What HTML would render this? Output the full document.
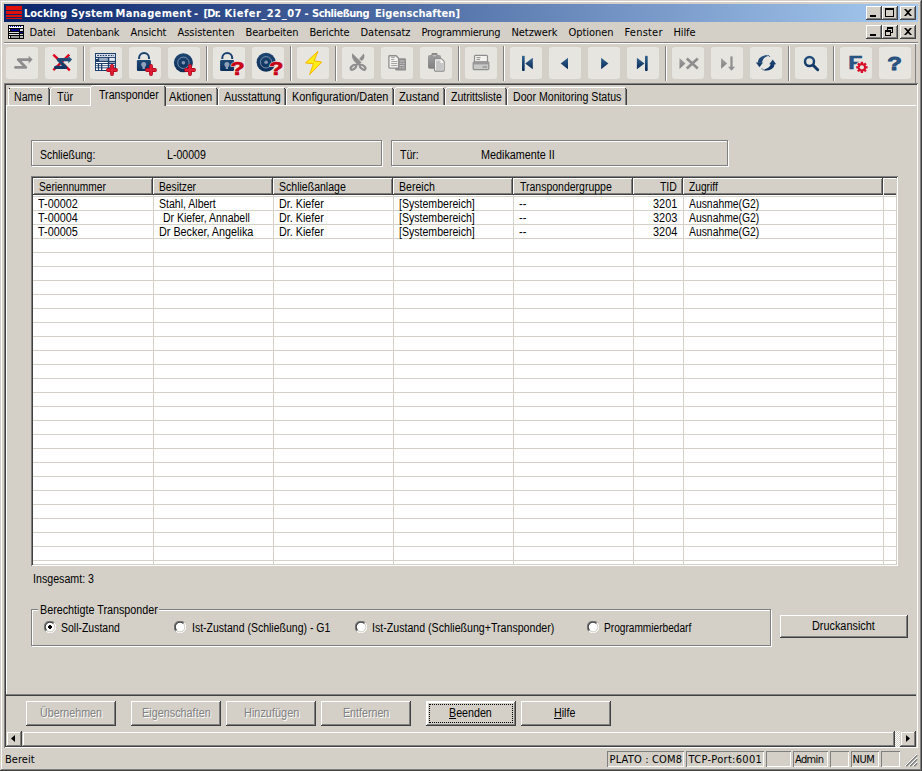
<!DOCTYPE html>
<html lang="de"><head><meta charset="utf-8"><title>Locking System Management</title>
<style>
html,body{margin:0;padding:0;}
body{width:922px;height:771px;overflow:hidden;background:#d4d0c8;position:relative;}
div,span,svg{position:absolute;box-sizing:border-box;}

.x{position:absolute;white-space:pre;line-height:16px;height:16px;color:#000;}
.s{font:12px "Liberation Sans", sans-serif;transform-origin:0 0;}
.t{font:11px "DejaVu Sans Condensed", "Liberation Sans", sans-serif;}
.tb{font:bold 11px "DejaVu Sans Condensed", "Liberation Sans", sans-serif;color:#fff;}
.dis{color:#808080;text-shadow:1px 1px 0 #fff;}
.x u{text-decoration:underline;text-underline-offset:1px;}

.hl{height:1px;}.vl{width:1px;}
.raised{background:#d4d0c8;box-shadow:inset -1px -1px 0 #404040, inset 1px 1px 0 #fff, inset -2px -2px 0 #808080;}
.btn{background:#d4d0c8;box-shadow:inset -1px -1px 0 #404040, inset 1px 1px 0 #fff, inset -2px -2px 0 #808080;}
.sbb{background:#d4d0c8;box-shadow:inset -1px -1px 0 #404040, inset 1px 1px 0 #d4d0c8, inset -2px -2px 0 #808080, inset 2px 2px 0 #fff;}
.sunk{box-shadow:inset 1px 1px 0 #808080, inset -1px -1px 0 #fff;}
.pane{box-shadow:inset 1px 1px 0 #808080, inset -1px -1px 0 #fff;}
.etch{border:1px solid #808080;box-shadow:1px 1px 0 #fff, inset 1px 1px 0 #fff;}
.tbb{width:32px;height:32px;top:47px;background:#e7e5e0;border-radius:3px;}
.tsep{top:46px;width:2px;height:35px;border-left:1px solid #808080;border-right:1px solid #fff;}
.hd{top:178px;height:17px;background:#d4d0c8;box-shadow:inset -1px -1px 0 #404040, inset 1px 1px 0 #fff, inset -2px -2px 0 #808080;}
.gv{top:195px;width:1px;height:369px;background:#d5d1c9;}
.gh{left:33px;width:863px;height:1px;background:#d5d1c9;}
.radio{width:12px;height:12px;border-radius:50%;background:#fff;box-shadow:inset 1px 1px 0 #808080, inset 2px 2px 0 #404040;}
</style></head>
<body>
<!-- window frame -->
<div style="left:0;top:0;width:922px;height:771px;box-shadow:inset -1px -1px 0 #404040, inset 1px 1px 0 #d4d0c8, inset -2px -2px 0 #808080, inset 2px 2px 0 #fff;"></div>
<!-- title bar -->
<div id="title" style="left:4px;top:4px;width:914px;height:18px;background:linear-gradient(90deg,#0a246a 0%,#a6caf0 100%);"></div>
<svg style="left:6px;top:6px" width="16" height="14" viewBox="0 0 16 14"><rect x="0" y="0" width="16" height="4" fill="#e01008"/><rect x="0" y="5" width="16" height="3" fill="#e01008"/><rect x="0" y="9" width="16" height="2" fill="#e01008"/><rect x="0" y="12" width="16" height="1" fill="#e01008"/></svg>
<!-- caption buttons -->
<div class="btn" style="left:866px;top:6px;width:16px;height:14px"></div>
<div class="btn" style="left:882px;top:6px;width:16px;height:14px"></div>
<div class="btn" style="left:900px;top:6px;width:16px;height:14px"></div>
<div class="btn" style="left:866px;top:25px;width:16px;height:14px"></div>
<div class="btn" style="left:882px;top:25px;width:16px;height:14px"></div>
<div class="btn" style="left:900px;top:25px;width:16px;height:14px"></div>
<svg style="left:866px;top:6px" width="50" height="33" viewBox="0 0 50 33" shape-rendering="crispEdges" fill="#000">
<rect x="4" y="9" width="6" height="2"/>
<path d="M19 2h9v9h-9zM20 4v6h7v-6z" fill-rule="evenodd"/>
<path d="M38 3h2l2 2 2-2h2l-3 3.5 3 3.500h-2l-2-2-2 2h-2l3-3.500z" shape-rendering="auto"/>
<rect x="4" y="28" width="6" height="2"/>
<path d="M21 21h6v6h-2v-1h1v-3h-4v1h-1zM19 24h6v6h-6zM20 26v3h4v-3z" fill-rule="evenodd"/>
<path d="M38 22h2l2 2 2-2h2l-3 3.500 3 3.500h-2l-2-2-2 2h-2l3-3.500z" shape-rendering="auto"/>
</svg>
<!-- menu bar -->
<svg style="left:8px;top:25px" width="16" height="14" viewBox="0 0 16 14" shape-rendering="crispEdges"><rect width="16" height="14" fill="#000"/><rect x="1" y="1" width="14" height="2" fill="#fff"/><rect x="2" y="1" width="1" height="1" fill="#00a"/><rect x="4" y="1" width="1" height="1" fill="#00a"/><rect x="6" y="1" width="1" height="1" fill="#00a"/><rect x="8" y="1" width="1" height="1" fill="#00a"/><rect x="10" y="1" width="1" height="1" fill="#00a"/><rect x="12" y="1" width="1" height="1" fill="#00a"/><rect x="1" y="4" width="1" height="2" fill="#fff"/><rect x="3" y="4" width="8" height="2" fill="#00008b"/><rect x="12" y="4" width="3" height="2" fill="#ddd"/><rect x="1" y="7" width="10" height="1" fill="#ddd"/><rect x="12" y="7" width="3" height="1" fill="#00008b"/><rect x="1" y="9" width="10" height="1" fill="#ddd"/><rect x="12" y="9" width="3" height="1" fill="#ddd"/><rect x="1" y="11" width="1" height="2" fill="#fff"/><rect x="3" y="11" width="8" height="2" fill="#999"/><rect x="12" y="11" width="3" height="2" fill="#bbb"/></svg>
<div class="hl" style="left:4px;top:42px;width:914px;background:#808080"></div>
<div class="hl" style="left:4px;top:43px;width:914px;background:#fff"></div>
<!-- toolbar -->
<div class="vl" style="left:915px;top:44px;height:39px;background:#808080"></div>
<div id="toolbar"><div class="tbb" style="left:6px"></div><div class="tbb" style="left:45px"></div><div class="tbb" style="left:90px"></div><div class="tbb" style="left:129px"></div><div class="tbb" style="left:168px"></div><div class="tbb" style="left:213px"></div><div class="tbb" style="left:252px"></div><div class="tbb" style="left:297px"></div><div class="tbb" style="left:342px"></div><div class="tbb" style="left:381px"></div><div class="tbb" style="left:420px"></div><div class="tbb" style="left:465px"></div><div class="tbb" style="left:510px"></div><div class="tbb" style="left:549px"></div><div class="tbb" style="left:588px"></div><div class="tbb" style="left:627px"></div><div class="tbb" style="left:672px"></div><div class="tbb" style="left:711px"></div><div class="tbb" style="left:750px"></div><div class="tbb" style="left:795px"></div><div class="tbb" style="left:840px"></div><div class="tbb" style="left:879px"></div><div class="tsep" style="left:83px"></div><div class="tsep" style="left:206px"></div><div class="tsep" style="left:290px"></div><div class="tsep" style="left:335px"></div><div class="tsep" style="left:458px"></div><div class="tsep" style="left:503px"></div><div class="tsep" style="left:665px"></div><div class="tsep" style="left:788px"></div><div class="tsep" style="left:833px"></div><svg width="0" height="0" style="left:0;top:0"><defs>
<linearGradient id="nv" x1="0" y1="0" x2="0" y2="1"><stop offset="0" stop-color="#33638f"/><stop offset="1" stop-color="#082a57"/></linearGradient>
<linearGradient id="nvu" gradientUnits="userSpaceOnUse" x1="0" y1="5" x2="0" y2="26"><stop offset="0" stop-color="#2c5a87"/><stop offset="1" stop-color="#082a57"/></linearGradient>
<linearGradient id="rd" x1="0" y1="0" x2="0" y2="1"><stop offset="0" stop-color="#e8203a"/><stop offset="1" stop-color="#b80018"/></linearGradient>
<linearGradient id="gy" x1="0" y1="0" x2="0" y2="1"><stop offset="0" stop-color="#a0a0a0"/><stop offset="1" stop-color="#808080"/></linearGradient>
<g id="plus"><path d="M22 19v8M18 23h8" stroke="#a80018" stroke-width="3.800" stroke-linecap="round"/><path d="M22 19v8M18 23h8" stroke="#de1c34" stroke-width="2.600" stroke-linecap="round"/></g>
<g id="lock"><path d="M10.100 12v-1.100a4.950 4.950 0 0 1 9.900 0v1.100" fill="none" stroke="#17406e" stroke-width="2"/><rect x="7.900" y="13.100" width="14" height="10.900" rx="1.200" fill="url(#nvu)"/><circle cx="14.700" cy="17.400" r="2.500" fill="#8fa0bb"/><rect x="13.500" y="18" width="2.400" height="4" rx=".5" fill="#8fa0bb"/></g>
<g id="disc"><circle cx="15.400" cy="15.800" r="9.500" fill="url(#nvd)"/><circle cx="15.400" cy="15.800" r="5.700" fill="none" stroke="#8ea3c0" stroke-width=".8"/><circle cx="15.400" cy="15.800" r="1.800" fill="#8296b5"/></g>
<linearGradient id="nvd" gradientUnits="userSpaceOnUse" x1="0" y1="6" x2="0" y2="26"><stop offset="0" stop-color="#1d4672"/><stop offset="1" stop-color="#0c2e58"/></linearGradient>
</defs></svg>
<svg style="left:6px;top:47px" width="32" height="32" viewBox="0 0 32 32"><path d="M9.500 20.400h10.300l-7.600-7.800h11" fill="none" stroke="#8e8e8e" stroke-width="2.800" stroke-linecap="round" stroke-linejoin="round"/><path d="M22.600 8.800l4 3.800-4 3.800z" fill="#8e8e8e"/></svg>
<svg style="left:45px;top:47px" width="32" height="32" viewBox="0 0 32 32"><path d="M8.300 7.600l16.500 15.800M24.300 7.600l-16 15.600" stroke="#e0001c" stroke-width="2.400"/><path d="M10.500 20.400h10.300l-7.600-7.800h10.500" fill="none" stroke="url(#nvu)" stroke-width="3.100" stroke-linecap="round" stroke-linejoin="round"/><path d="M23.300 8.900l3.800 3.700-3.800 3.700z" fill="#23507f"/></svg>
<svg style="left:90px;top:47px" width="32" height="32" viewBox="0 0 32 32"><rect x="5" y="6" width="21" height="18" fill="#1c3f6e"/><rect x="6" y="7.200" width="19" height="2.600" fill="#fff"/><path d="M7.200 8.500h17" stroke="#1c3f6e" stroke-width="1" stroke-dasharray="1.700 1"/><rect x="6" y="11" width="1.800" height="1" fill="#fff"/><rect x="9.100" y="10.900" width="8.700" height="3" fill="#9aabc4"/><rect x="19.300" y="10.900" width="5.600" height="3" fill="#e4e8ee"/><rect x="6" y="15" width="11.800" height="1" fill="#fff"/><rect x="19.300" y="15" width="5.600" height="1" fill="#9aabc4"/><rect x="6" y="17" width="1.800" height="1.300" fill="#fff"/><rect x="9.100" y="17" width="1.900" height="1.300" fill="#fff"/><rect x="12.300" y="17" width="5.500" height="1.300" fill="#fff"/><rect x="19.300" y="17" width="5.600" height="1.300" fill="#fff"/><rect x="6" y="19.100" width="1.800" height="1.300" fill="#fff"/><rect x="9.100" y="19.100" width="1.900" height="1.300" fill="#fff"/><rect x="12.300" y="19.100" width="5.500" height="1.300" fill="#fff"/><rect x="19.300" y="19.100" width="5.600" height="1.300" fill="#fff"/><rect x="6" y="21.300" width="2" height="1.700" fill="#fff"/><rect x="9.100" y="21.300" width="1.900" height="1.700" fill="#fff"/><rect x="12.300" y="21.300" width="5.500" height="1.700" fill="#fff"/><use href="#plus"/></svg>
<svg style="left:129px;top:47px" width="32" height="32" viewBox="0 0 32 32"><use href="#lock"/><use href="#plus"/></svg>
<svg style="left:168px;top:47px" width="32" height="32" viewBox="0 0 32 32"><use href="#disc"/><use href="#plus"/></svg>
<svg style="left:213px;top:47px" width="32" height="32" viewBox="0 0 32 32"><g transform="translate(-0.800,0)"><use href="#lock"/></g><g transform="translate(17.6,28) scale(1.32,1)"><text x="0" y="0" font-family="Liberation Sans, sans-serif" font-weight="bold" font-size="17.5" fill="#c80014" stroke="#efeeea" stroke-width="1.7" stroke-linejoin="round">?</text><text x="0" y="0" font-family="Liberation Sans, sans-serif" font-weight="bold" font-size="17.5" fill="#c80014" stroke="#c80014" stroke-width="0.7">?</text></g></svg>
<svg style="left:252px;top:47px" width="32" height="32" viewBox="0 0 32 32"><g transform="translate(-1.300,-0.500)"><use href="#disc"/></g><g transform="translate(17.3,28) scale(1.32,1)"><text x="0" y="0" font-family="Liberation Sans, sans-serif" font-weight="bold" font-size="17.5" fill="#c80014" stroke="#efeeea" stroke-width="1.7" stroke-linejoin="round">?</text><text x="0" y="0" font-family="Liberation Sans, sans-serif" font-weight="bold" font-size="17.5" fill="#c80014" stroke="#c80014" stroke-width="0.7">?</text></g></svg>
<svg style="left:297px;top:47px" width="32" height="32" viewBox="0 0 32 32"><path d="M21 4.200L8.500 15.900 16.400 16.700 12.600 27.600 24.800 15 17.200 13.800z" fill="#ffee14" stroke="#f7b400" stroke-width="1" stroke-linejoin="round"/></svg>
<svg style="left:342px;top:47px" width="32" height="32" viewBox="0 0 32 32"><path d="M10.200 6.200L19.500 15.300 17.200 17.400 13.600 15.800C10.600 12.800 9.200 9.500 10.200 6.200z" fill="#8e8e8e"/><path d="M21.800 6.400C23.100 9.200 22.100 12.100 19.900 13.900L17.100 11.900z" fill="#8e8e8e"/><path d="M13.600 18.400l3.400-2.400M18.600 18.400l-3.200-2.400" stroke="#8e8e8e" stroke-width="2.300"/><ellipse cx="11.400" cy="20.300" rx="3.200" ry="1.750" transform="rotate(-38 11.400 20.300)" fill="#e2e0db" stroke="#8e8e8e" stroke-width="2.100"/><ellipse cx="20.700" cy="20.300" rx="3.200" ry="1.750" transform="rotate(38 20.700 20.300)" fill="#e2e0db" stroke="#8e8e8e" stroke-width="2.100"/></svg>
<svg style="left:381px;top:47px" width="32" height="32" viewBox="0 0 32 32"><rect x="14.300" y="11.200" width="10.700" height="12.400" rx="1.200" fill="#8e8e8e"/><path d="M18.500 14h5M18.500 16.300h2M21.500 16.300h2M18.500 18.600h5M18.500 20.900h1.500M21 20.900h2.500" stroke="#d0d0d0" stroke-width=".9"/><path d="M8.700 8.750h6.400l2.500 2.500v9a.8.8 0 0 1-.8.8h-8.100a.8.800 0 0 1-.8-.8v-10.700a.8.800 0 0 1 .8-.8z" fill="#f3f2ef" stroke="#8e8e8e" stroke-width="1.300"/><path d="M10.200 10.500h3.500M10.200 12.500h3M10.200 14.500h6M10.200 16.500h6M10.200 18.500h6" stroke="#8e8e8e" stroke-width=".8"/></svg>
<svg style="left:420px;top:47px" width="32" height="32" viewBox="0 0 32 32"><rect x="8" y="8" width="13" height="13.700" rx="1.800" fill="url(#gy)"/><rect x="11.500" y="6" width="6" height="4" rx="1" fill="#8a8a8a"/><rect x="12.500" y="8.200" width="4" height="1.200" fill="#d0d0d0"/><path d="M15.300 11.700h6.200l2.700 2.700v8.900a.800.800 0 0 1-.8.800h-8.100a.800.800 0 0 1-.8-.8v-10.800a.800.800 0 0 1 .8-.8z" fill="#f4f4f2" stroke="#888" stroke-width="1.100"/><path d="M16 13.500h4.500v2.500h2.500v7h-7z" fill="#c6c6c6"/></svg>
<svg style="left:465px;top:47px" width="32" height="32" viewBox="0 0 32 32"><rect x="9.500" y="8.400" width="13" height="7" rx="1" fill="#f3f2ef" stroke="#8e8e8e" stroke-width="1.200"/><path d="M11.500 10.600h4M11.500 12.600h3.500" stroke="#8e8e8e" stroke-width="1"/><rect x="8.200" y="14.800" width="15.600" height="7.800" rx="1.200" fill="#c9c9c7" stroke="#8e8e8e" stroke-width="1.200"/><rect x="8.800" y="14.800" width="14.400" height="2.600" fill="#999"/><path d="M17.600 20h4.400" stroke="#8a8a8a" stroke-width="1.200"/></svg>
<svg style="left:510px;top:47px" width="32" height="32" viewBox="0 0 32 32"><rect x="12" y="8.800" width="2.700" height="15.200" rx=".8" fill="url(#nv)"/><path d="M15.200 16.500l7.600-5.700v11.400z" fill="url(#nv)"/></svg>
<svg style="left:549px;top:47px" width="32" height="32" viewBox="0 0 32 32"><path d="M11.700 16.500l7.300-5.700v11.400z" fill="url(#nv)"/></svg>
<svg style="left:588px;top:47px" width="32" height="32" viewBox="0 0 32 32"><path d="M20.400 16.500l-7.300-5.700v11.400z" fill="url(#nv)"/></svg>
<svg style="left:627px;top:47px" width="32" height="32" viewBox="0 0 32 32"><rect x="18" y="8.800" width="2.700" height="15.200" rx=".8" fill="url(#nv)"/><path d="M17.500 16.500l-7.600-5.700v11.400z" fill="url(#nv)"/></svg>
<svg style="left:672px;top:47px" width="32" height="32" viewBox="0 0 32 32"><path d="M7.500 10.900l5.900 5.500-5.900 5.500z" fill="url(#gy)"/><path d="M14.800 11.500l11 9.900M25.800 11.500l-11 9.900" stroke="#8e8e8e" stroke-width="2.700"/></svg>
<svg style="left:711px;top:47px" width="32" height="32" viewBox="0 0 32 32"><path d="M10.100 11.100l6 5.300-6 5.300z" fill="url(#gy)"/><path d="M20.500 9.400v11" stroke="#8e8e8e" stroke-width="2.200"/><path d="M17 19.800h7l-3.500 4z" fill="#8e8e8e"/></svg>
<svg style="left:750px;top:47px" width="32" height="32" viewBox="0 0 32 32"><path d="M7.700 15.800Q8 9 17.600 7.700L17.500 9.300Q12.800 10.800 11.800 15.800z" fill="url(#nvu)"/><path d="M5.900 15.400h7.200l-3.600 4.800z" fill="url(#nvu)"/><path d="M24.600 17Q24.400 23.200 14.400 23.800L14.300 22.400Q19.600 21.200 20.700 17z" fill="url(#nvu)"/><path d="M19.200 17.300h7l-3.500-4.700z" fill="url(#nvu)"/><circle cx="18.600" cy="8.600" r=".55" fill="#1d4a7a"/><circle cx="19.700" cy="9.500" r=".5" fill="#1d4a7a"/><circle cx="13.200" cy="22.700" r=".55" fill="#0f3360"/><circle cx="12" cy="21.800" r=".5" fill="#0f3360"/></svg>
<svg style="left:795px;top:47px" width="32" height="32" viewBox="0 0 32 32"><circle cx="14.500" cy="14.600" r="4.500" fill="none" stroke="url(#nvu)" stroke-width="2.500"/><path d="M18.200 18.300l4.500 4.400" stroke="#143a68" stroke-width="3" stroke-linecap="round"/></svg>
<svg style="left:840px;top:47px" width="32" height="32" viewBox="0 0 32 32"><g transform="translate(8.200,22.400) scale(1.280,1)"><text x="0" y="0" font-family="Liberation Sans, sans-serif" font-weight="bold" font-size="18.200" fill="url(#nvu)" stroke="#1a4473" stroke-width=".5">F</text></g><circle cx="21.900" cy="20.300" r="6.500" fill="#e9e7e2"/><path d="M27.57 19.08L27.57 21.52L26.05 21.43L25.64 22.43L26.77 23.45L25.05 25.17L24.03 24.04L23.03 24.45L23.12 25.97L20.68 25.97L20.77 24.45L19.77 24.04L18.75 25.17L17.03 23.45L18.16 22.43L17.75 21.43L16.23 21.52L16.23 19.08L17.75 19.17L18.16 18.17L17.03 17.15L18.75 15.43L19.77 16.56L20.77 16.15L20.68 14.63L23.12 14.63L23.03 16.15L24.03 16.56L25.05 15.43L26.77 17.15L25.64 18.17L26.05 19.17z" fill="#d8102a"/><circle cx="21.900" cy="20.300" r="2.100" fill="#e9e7e2"/></svg>
<svg style="left:879px;top:47px" width="32" height="32" viewBox="0 0 32 32"><g transform="translate(8.300,23) scale(1.260,1)"><text x="0" y="0" font-family="Liberation Sans, sans-serif" font-weight="bold" font-size="19" fill="url(#nvu)" stroke="#1d4a7a" stroke-width=".9">?</text></g></svg></div>
<!-- MDI client sunken frame -->
<div style="left:4px;top:83px;width:914px;height:665px;box-shadow:inset 1px 1px 0 #808080, inset -1px -1px 0 #fff, inset 2px 2px 0 #404040, inset -2px -2px 0 #d4d0c8;"></div>
<!-- tabs -->
<div id="tabs"><div style="left:6px;top:105px;width:910px;height:1px;background:#fff"></div>
<div style="left:6px;top:105px;width:1px;height:589px;background:#fff"></div>
<div style="left:8px;top:89px;width:1px;height:16px;background:#fff"></div>
<div style="left:9px;top:88px;width:1px;height:1px;background:#202020"></div>
<div style="left:10px;top:87px;width:38px;height:1px;background:#fff"></div>
<div style="left:48px;top:88px;width:1px;height:1px;background:#404040"></div>
<div style="left:48px;top:89px;width:1px;height:16px;background:#808080"></div>
<div style="left:49px;top:89px;width:1px;height:16px;background:#404040"></div>
<div style="left:50px;top:89px;width:1px;height:16px;background:#fff"></div>
<div style="left:51px;top:88px;width:1px;height:1px;background:#fff"></div>
<div style="left:52px;top:87px;width:38px;height:1px;background:#fff"></div>
<div style="left:166px;top:87px;width:50px;height:1px;background:#fff"></div>
<div style="left:216px;top:88px;width:1px;height:1px;background:#404040"></div>
<div style="left:216px;top:89px;width:1px;height:16px;background:#808080"></div>
<div style="left:217px;top:89px;width:1px;height:16px;background:#404040"></div>
<div style="left:218px;top:89px;width:1px;height:16px;background:#fff"></div>
<div style="left:219px;top:88px;width:1px;height:1px;background:#fff"></div>
<div style="left:220px;top:87px;width:64px;height:1px;background:#fff"></div>
<div style="left:284px;top:88px;width:1px;height:1px;background:#404040"></div>
<div style="left:284px;top:89px;width:1px;height:16px;background:#808080"></div>
<div style="left:285px;top:89px;width:1px;height:16px;background:#404040"></div>
<div style="left:286px;top:89px;width:1px;height:16px;background:#fff"></div>
<div style="left:287px;top:88px;width:1px;height:1px;background:#fff"></div>
<div style="left:288px;top:87px;width:104px;height:1px;background:#fff"></div>
<div style="left:392px;top:88px;width:1px;height:1px;background:#404040"></div>
<div style="left:392px;top:89px;width:1px;height:16px;background:#808080"></div>
<div style="left:393px;top:89px;width:1px;height:16px;background:#404040"></div>
<div style="left:394px;top:89px;width:1px;height:16px;background:#fff"></div>
<div style="left:395px;top:88px;width:1px;height:1px;background:#fff"></div>
<div style="left:396px;top:87px;width:47px;height:1px;background:#fff"></div>
<div style="left:443px;top:88px;width:1px;height:1px;background:#404040"></div>
<div style="left:443px;top:89px;width:1px;height:16px;background:#808080"></div>
<div style="left:444px;top:89px;width:1px;height:16px;background:#404040"></div>
<div style="left:445px;top:89px;width:1px;height:16px;background:#fff"></div>
<div style="left:446px;top:88px;width:1px;height:1px;background:#fff"></div>
<div style="left:447px;top:87px;width:58px;height:1px;background:#fff"></div>
<div style="left:505px;top:88px;width:1px;height:1px;background:#404040"></div>
<div style="left:505px;top:89px;width:1px;height:16px;background:#808080"></div>
<div style="left:506px;top:89px;width:1px;height:16px;background:#404040"></div>
<div style="left:507px;top:89px;width:1px;height:16px;background:#fff"></div>
<div style="left:508px;top:88px;width:1px;height:1px;background:#fff"></div>
<div style="left:509px;top:87px;width:116px;height:1px;background:#fff"></div>
<div style="left:625px;top:88px;width:1px;height:1px;background:#404040"></div>
<div style="left:625px;top:89px;width:1px;height:16px;background:#808080"></div>
<div style="left:626px;top:89px;width:1px;height:16px;background:#404040"></div>
<div style="left:90px;top:85px;width:76px;height:21px;background:#d4d0c8"></div>
<div style="left:90px;top:87px;width:1px;height:19px;background:#fff"></div>
<div style="left:91px;top:86px;width:1px;height:1px;background:#fff"></div>
<div style="left:92px;top:85px;width:72px;height:1px;background:#fff"></div>
<div style="left:164px;top:86px;width:1px;height:1px;background:#404040"></div>
<div style="left:164px;top:87px;width:1px;height:19px;background:#808080"></div>
<div style="left:165px;top:87px;width:1px;height:19px;background:#404040"></div></div>
<!-- field frames -->
<div class="etch" style="left:31px;top:140px;width:351px;height:26px"></div>
<div class="etch" style="left:391px;top:140px;width:337px;height:26px"></div>
<!-- list -->
<div style="left:31px;top:176px;width:867px;height:390px;background:#fff;box-shadow:inset 1px 1px 0 #808080, inset -1px -1px 0 #fff, inset 2px 2px 0 #404040, inset -2px -2px 0 #d4d0c8;"></div>
<div id="list"><div class="hd" style="left:33px;width:120px"></div><div class="hd" style="left:153px;width:120px"></div><div class="hd" style="left:273px;width:120px"></div><div class="hd" style="left:393px;width:120px"></div><div class="hd" style="left:513px;width:120px"></div><div class="hd" style="left:633px;width:50px"></div><div class="hd" style="left:683px;width:200px"></div><div class="hd" style="left:883px;width:13px;box-shadow:inset 1px 1px 0 #fff, inset 0 -1px 0 #404040, inset 0 -2px 0 #808080"></div><div class="gv" style="left:153px"></div><div class="gv" style="left:273px"></div><div class="gv" style="left:393px"></div><div class="gv" style="left:513px"></div><div class="gv" style="left:633px"></div><div class="gv" style="left:683px"></div><div class="gv" style="left:883px"></div><div class="gh" style="top:196px"></div><div class="gh" style="top:210px"></div><div class="gh" style="top:224px"></div><div class="gh" style="top:238px"></div><div class="gh" style="top:252px"></div><div class="gh" style="top:266px"></div><div class="gh" style="top:280px"></div><div class="gh" style="top:294px"></div><div class="gh" style="top:308px"></div><div class="gh" style="top:322px"></div><div class="gh" style="top:336px"></div><div class="gh" style="top:350px"></div><div class="gh" style="top:364px"></div><div class="gh" style="top:378px"></div><div class="gh" style="top:392px"></div><div class="gh" style="top:406px"></div><div class="gh" style="top:420px"></div><div class="gh" style="top:434px"></div><div class="gh" style="top:448px"></div><div class="gh" style="top:462px"></div><div class="gh" style="top:476px"></div><div class="gh" style="top:490px"></div><div class="gh" style="top:504px"></div><div class="gh" style="top:518px"></div><div class="gh" style="top:532px"></div><div class="gh" style="top:546px"></div><div class="gh" style="top:560px"></div></div>
<!-- group box -->
<div class="etch" style="left:31px;top:609px;width:740px;height:37px"></div>
<div style="left:38px;top:604px;width:121px;height:14px;background:#d4d0c8"></div>
<svg style="left:44px;top:621px" width="12" height="12" viewBox="0 0 12 12"><circle cx="6" cy="6" r="5" fill="#fff"/><path d="M1.900 10.100A5.500 5.500 0 0 1 10.100 1.900" fill="none" stroke="#808080" stroke-width="1.200"/><path d="M10.100 1.900A5.500 5.500 0 0 1 1.900 10.100" fill="none" stroke="#fff" stroke-width="1"/><path d="M2.600 9.400A4.500 4.500 0 0 1 9.400 2.600" fill="none" stroke="#404040" stroke-width="1.200"/><path d="M9.400 2.600A4.500 4.500 0 0 1 2.600 9.400" fill="none" stroke="#d4d0c8" stroke-width="1"/><path d="M5 4h2v1h1v2h-1v1h-2v-1h-1v-2h1z" fill="#000" shape-rendering="crispEdges"/></svg>
<svg style="left:174px;top:621px" width="12" height="12" viewBox="0 0 12 12"><circle cx="6" cy="6" r="5" fill="#fff"/><path d="M1.900 10.100A5.500 5.500 0 0 1 10.100 1.900" fill="none" stroke="#808080" stroke-width="1.200"/><path d="M10.100 1.900A5.500 5.500 0 0 1 1.900 10.100" fill="none" stroke="#fff" stroke-width="1"/><path d="M2.600 9.400A4.500 4.500 0 0 1 9.400 2.600" fill="none" stroke="#404040" stroke-width="1.200"/><path d="M9.400 2.600A4.500 4.500 0 0 1 2.600 9.400" fill="none" stroke="#d4d0c8" stroke-width="1"/></svg>
<svg style="left:355px;top:621px" width="12" height="12" viewBox="0 0 12 12"><circle cx="6" cy="6" r="5" fill="#fff"/><path d="M1.900 10.100A5.500 5.500 0 0 1 10.100 1.900" fill="none" stroke="#808080" stroke-width="1.200"/><path d="M10.100 1.900A5.500 5.500 0 0 1 1.900 10.100" fill="none" stroke="#fff" stroke-width="1"/><path d="M2.600 9.400A4.500 4.500 0 0 1 9.400 2.600" fill="none" stroke="#404040" stroke-width="1.200"/><path d="M9.400 2.600A4.500 4.500 0 0 1 2.600 9.400" fill="none" stroke="#d4d0c8" stroke-width="1"/></svg>
<svg style="left:587px;top:621px" width="12" height="12" viewBox="0 0 12 12"><circle cx="6" cy="6" r="5" fill="#fff"/><path d="M1.900 10.100A5.500 5.500 0 0 1 10.100 1.900" fill="none" stroke="#808080" stroke-width="1.200"/><path d="M10.100 1.900A5.500 5.500 0 0 1 1.900 10.100" fill="none" stroke="#fff" stroke-width="1"/><path d="M2.600 9.400A4.500 4.500 0 0 1 9.400 2.600" fill="none" stroke="#404040" stroke-width="1.200"/><path d="M9.400 2.600A4.500 4.500 0 0 1 2.600 9.400" fill="none" stroke="#d4d0c8" stroke-width="1"/></svg>
<div class="btn" style="left:780px;top:615px;width:128px;height:23px"></div>
<!-- bottom line + buttons -->
<div class="hl" style="left:6px;top:694px;width:910px;background:#808080"></div>
<div class="hl" style="left:6px;top:695px;width:910px;background:#404040"></div>
<div class="btn" style="left:26px;top:701px;width:90px;height:25px"></div>
<div class="btn" style="left:131px;top:701px;width:90px;height:25px"></div>
<div class="btn" style="left:226px;top:701px;width:90px;height:25px"></div>
<div class="btn" style="left:321px;top:701px;width:90px;height:25px"></div>
<div class="btn" style="left:426px;top:701px;width:90px;height:25px;box-shadow:inset -1px -1px 0 #404040, inset 1px 1px 0 #fff, inset -2px -2px 0 #808080, inset 2px 2px 0 #fff;"></div>
<div style="left:429px;top:704px;width:84px;height:19px;border:1px dotted #000"></div>
<div class="btn" style="left:521px;top:701px;width:90px;height:25px"></div>
<!-- scrollbar -->
<div style="left:6px;top:731px;width:910px;height:16px;background:repeating-conic-gradient(#fff 0 25%,#d4d0c8 0 50%) 0 0/2px 2px"></div>
<div class="sbb" style="left:6px;top:731px;width:16px;height:16px"></div>
<div class="sbb" style="left:22px;top:731px;width:873px;height:16px"></div>
<div class="sbb" style="left:900px;top:731px;width:16px;height:16px"></div>
<svg style="left:6px;top:731px" width="910" height="16" viewBox="0 0 910 16"><path d="M9 4v7l-4-3.500z" fill="#000"/><path d="M900 4v7l4-3.500z" fill="#000"/></svg>
<!-- status bar -->
<div class="pane" style="left:607px;top:751px;width:77px;height:16px"></div>
<div class="pane" style="left:686px;top:751px;width:78px;height:16px"></div>
<div class="pane" style="left:766px;top:751px;width:25px;height:16px"></div>
<div class="pane" style="left:793px;top:751px;width:35px;height:16px"></div>
<div class="pane" style="left:830px;top:751px;width:19px;height:16px"></div>
<div class="pane" style="left:851px;top:751px;width:28px;height:16px"></div>
<div class="pane" style="left:881px;top:751px;width:19px;height:16px"></div>
<svg style="left:905px;top:754px" width="13" height="13" viewBox="0 0 13 13"><path d="M12 1L1 12M12 5L5 12M12 9L9 12" stroke="#808080" stroke-width="2"/><path d="M12 0L0 12M12 4L4 12M12 8L8 12" stroke="#fff" stroke-width="1"/></svg>
<!-- texts -->
<span class="x tb" style="left:24px;top:7px;letter-spacing:-0.013px;">Locking</span>
<span class="x tb" style="left:71px;top:7px;letter-spacing:0.153px;">System</span>
<span class="x tb" style="left:115.5px;top:7px;letter-spacing:0.349px;">Management</span>
<span class="x tb" style="left:194px;top:7px;letter-spacing:1.391px;">-</span>
<span class="x tb" style="left:203.5px;top:7px;letter-spacing:-0.776px;">[Dr.</span>
<span class="x tb" style="left:224.5px;top:7px;letter-spacing:0.536px;">Kiefer_22_07</span>
<span class="x tb" style="left:304.5px;top:7px;letter-spacing:0.891px;">-</span>
<span class="x tb" style="left:312px;top:7px;letter-spacing:-0.481px;">Schließung</span>
<span class="x tb" style="left:375px;top:7px;letter-spacing:0.093px;">Eigenschaften]</span>
<span class="x t" style="left:29.5px;top:26px;letter-spacing:-0.102px;">Datei</span>
<span class="x t" style="left:66.5px;top:26px;letter-spacing:-0.160px;">Datenbank</span>
<span class="x t" style="left:130.5px;top:26px;letter-spacing:-0.091px;">Ansicht</span>
<span class="x t" style="left:177.5px;top:26px;letter-spacing:-0.048px;">Assistenten</span>
<span class="x t" style="left:245.5px;top:26px;letter-spacing:-0.155px;">Bearbeiten</span>
<span class="x t" style="left:309.5px;top:26px;letter-spacing:-0.199px;">Berichte</span>
<span class="x t" style="left:360.5px;top:26px;letter-spacing:-0.029px;">Datensatz</span>
<span class="x t" style="left:421.5px;top:26px;letter-spacing:-0.315px;">Programmierung</span>
<span class="x t" style="left:511.5px;top:26px;letter-spacing:-0.078px;">Netzwerk</span>
<span class="x t" style="left:568.5px;top:26px;letter-spacing:-0.058px;">Optionen</span>
<span class="x t" style="left:624.5px;top:26px;letter-spacing:0.224px;">Fenster</span>
<span class="x t" style="left:673.5px;top:26px;letter-spacing:-0.129px;">Hilfe</span>
<span class="x s" style="left:14px;top:90px;transform:scaleX(0.8839);">Name</span>
<span class="x s" style="left:56.5px;top:90px;transform:scaleX(0.8944);">Tür</span>
<span class="x s" style="left:98.5px;top:88px;transform:scaleX(0.8847);">Transponder</span>
<span class="x s" style="left:169px;top:90px;transform:scaleX(0.9250);">Aktionen</span>
<span class="x s" style="left:223.5px;top:90px;transform:scaleX(0.8963);">Ausstattung</span>
<span class="x s" style="left:292px;top:90px;transform:scaleX(0.9088);">Konfiguration/Daten</span>
<span class="x s" style="left:399px;top:90px;transform:scaleX(0.9271);">Zustand</span>
<span class="x s" style="left:450.5px;top:90px;transform:scaleX(0.8756);">Zutrittsliste</span>
<span class="x s" style="left:513px;top:90px;transform:scaleX(0.8832);">Door Monitoring Status</span>
<span class="x s" style="left:40px;top:148px;transform:scaleX(0.8726);">Schließung:</span>
<span class="x s" style="left:166.5px;top:148px;transform:scaleX(0.8809);">L-00009</span>
<span class="x s" style="left:399.5px;top:148px;transform:scaleX(0.8808);">Tür:</span>
<span class="x s" style="left:480.5px;top:148px;transform:scaleX(0.8995);">Medikamente II</span>
<span class="x s" style="left:39px;top:180px;transform:scaleX(0.8488);">Seriennummer</span>
<span class="x s" style="left:159px;top:180px;transform:scaleX(0.8533);">Besitzer</span>
<span class="x s" style="left:278.5px;top:180px;transform:scaleX(0.8782);">Schließanlage</span>
<span class="x s" style="left:398.5px;top:180px;transform:scaleX(0.8799);">Bereich</span>
<span class="x s" style="left:519.5px;top:180px;transform:scaleX(0.8745);">Transpondergruppe</span>
<span class="x s" style="left:659.5px;top:180px;transform:scaleX(0.8685);">TID</span>
<span class="x s" style="left:689px;top:180px;transform:scaleX(0.8521);">Zugriff</span>
<span class="x s" style="left:37.5px;top:197px;transform:scaleX(0.9036);">T-00002</span>
<span class="x s" style="left:159px;top:197px;transform:scaleX(0.8776);">Stahl, Albert</span>
<span class="x s" style="left:278.5px;top:197px;transform:scaleX(0.8957);">Dr. Kiefer</span>
<span class="x s" style="left:398.5px;top:197px;transform:scaleX(0.8809);">[Systembereich]</span>
<span class="x s" style="left:519px;top:197px;transform:scaleX(0.9125);">--</span>
<span class="x s" style="left:653px;top:197px;transform:scaleX(0.9100);">3201</span>
<span class="x s" style="left:689px;top:197px;transform:scaleX(0.8639);">Ausnahme(G2)</span>
<span class="x s" style="left:37.5px;top:211px;transform:scaleX(0.9036);">T-00004</span>
<span class="x s" style="left:159.5px;top:211px;transform:scaleX(0.8741);"> Dr Kiefer, Annabell</span>
<span class="x s" style="left:278.5px;top:211px;transform:scaleX(0.8957);">Dr. Kiefer</span>
<span class="x s" style="left:398.5px;top:211px;transform:scaleX(0.8809);">[Systembereich]</span>
<span class="x s" style="left:519px;top:211px;transform:scaleX(0.9125);">--</span>
<span class="x s" style="left:653px;top:211px;transform:scaleX(0.9100);">3203</span>
<span class="x s" style="left:689px;top:211px;transform:scaleX(0.8639);">Ausnahme(G2)</span>
<span class="x s" style="left:37.5px;top:225px;transform:scaleX(0.9036);">T-00005</span>
<span class="x s" style="left:159px;top:225px;transform:scaleX(0.9005);">Dr Becker, Angelika</span>
<span class="x s" style="left:278.5px;top:225px;transform:scaleX(0.8957);">Dr. Kiefer</span>
<span class="x s" style="left:398.5px;top:225px;transform:scaleX(0.8809);">[Systembereich]</span>
<span class="x s" style="left:519px;top:225px;transform:scaleX(0.9125);">--</span>
<span class="x s" style="left:653px;top:225px;transform:scaleX(0.9100);">3204</span>
<span class="x s" style="left:689px;top:225px;transform:scaleX(0.8639);">Ausnahme(G2)</span>
<span class="x s" style="left:32.5px;top:572px;transform:scaleX(0.8879);">Insgesamt: 3</span>
<span class="x s" style="left:39.5px;top:603px;transform:scaleX(0.8964);">Berechtigte Transponder</span>
<span class="x s" style="left:61px;top:621px;transform:scaleX(0.8727);">Soll-Zustand</span>
<span class="x s" style="left:192px;top:621px;transform:scaleX(0.8750);">Ist-Zustand (Schließung) - G1</span>
<span class="x s" style="left:371.5px;top:621px;transform:scaleX(0.8850);">Ist-Zustand (Schließung+Transponder)</span>
<span class="x s" style="left:604px;top:621px;transform:scaleX(0.8445);">Programmierbedarf</span>
<span class="x s" style="left:812px;top:619px;transform:scaleX(0.9054);">Druckansicht</span>
<span class="x s dis" style="left:40px;top:706px;transform:scaleX(0.8937);">Übernehmen</span>
<span class="x s dis" style="left:142px;top:706px;transform:scaleX(0.9032);">Eigenschaften</span>
<span class="x s dis" style="left:243.5px;top:706px;transform:scaleX(0.9108);">Hinzufügen</span>
<span class="x s dis" style="left:343px;top:706px;transform:scaleX(0.8896);">Entfernen</span>
<span class="x s" style="left:448.5px;top:706px;transform:scaleX(0.8905);"><u>B</u>eenden</span>
<span class="x s" style="left:554px;top:706px;transform:scaleX(0.8869);"><u>H</u>ilfe</span>
<span class="x t" style="left:5px;top:753px;letter-spacing:0.032px;">Bereit</span>
<span class="x t" style="left:609.5px;top:753px;letter-spacing:0.178px;">PLATO : COM8</span>
<span class="x t" style="left:688.5px;top:753px;letter-spacing:0.300px;">TCP-Port:6001</span>
<span class="x t" style="left:795px;top:753px;letter-spacing:-0.633px;">Admin</span>
<span class="x t" style="left:852.5px;top:753px;letter-spacing:-0.394px;">NUM</span>
</body></html>
